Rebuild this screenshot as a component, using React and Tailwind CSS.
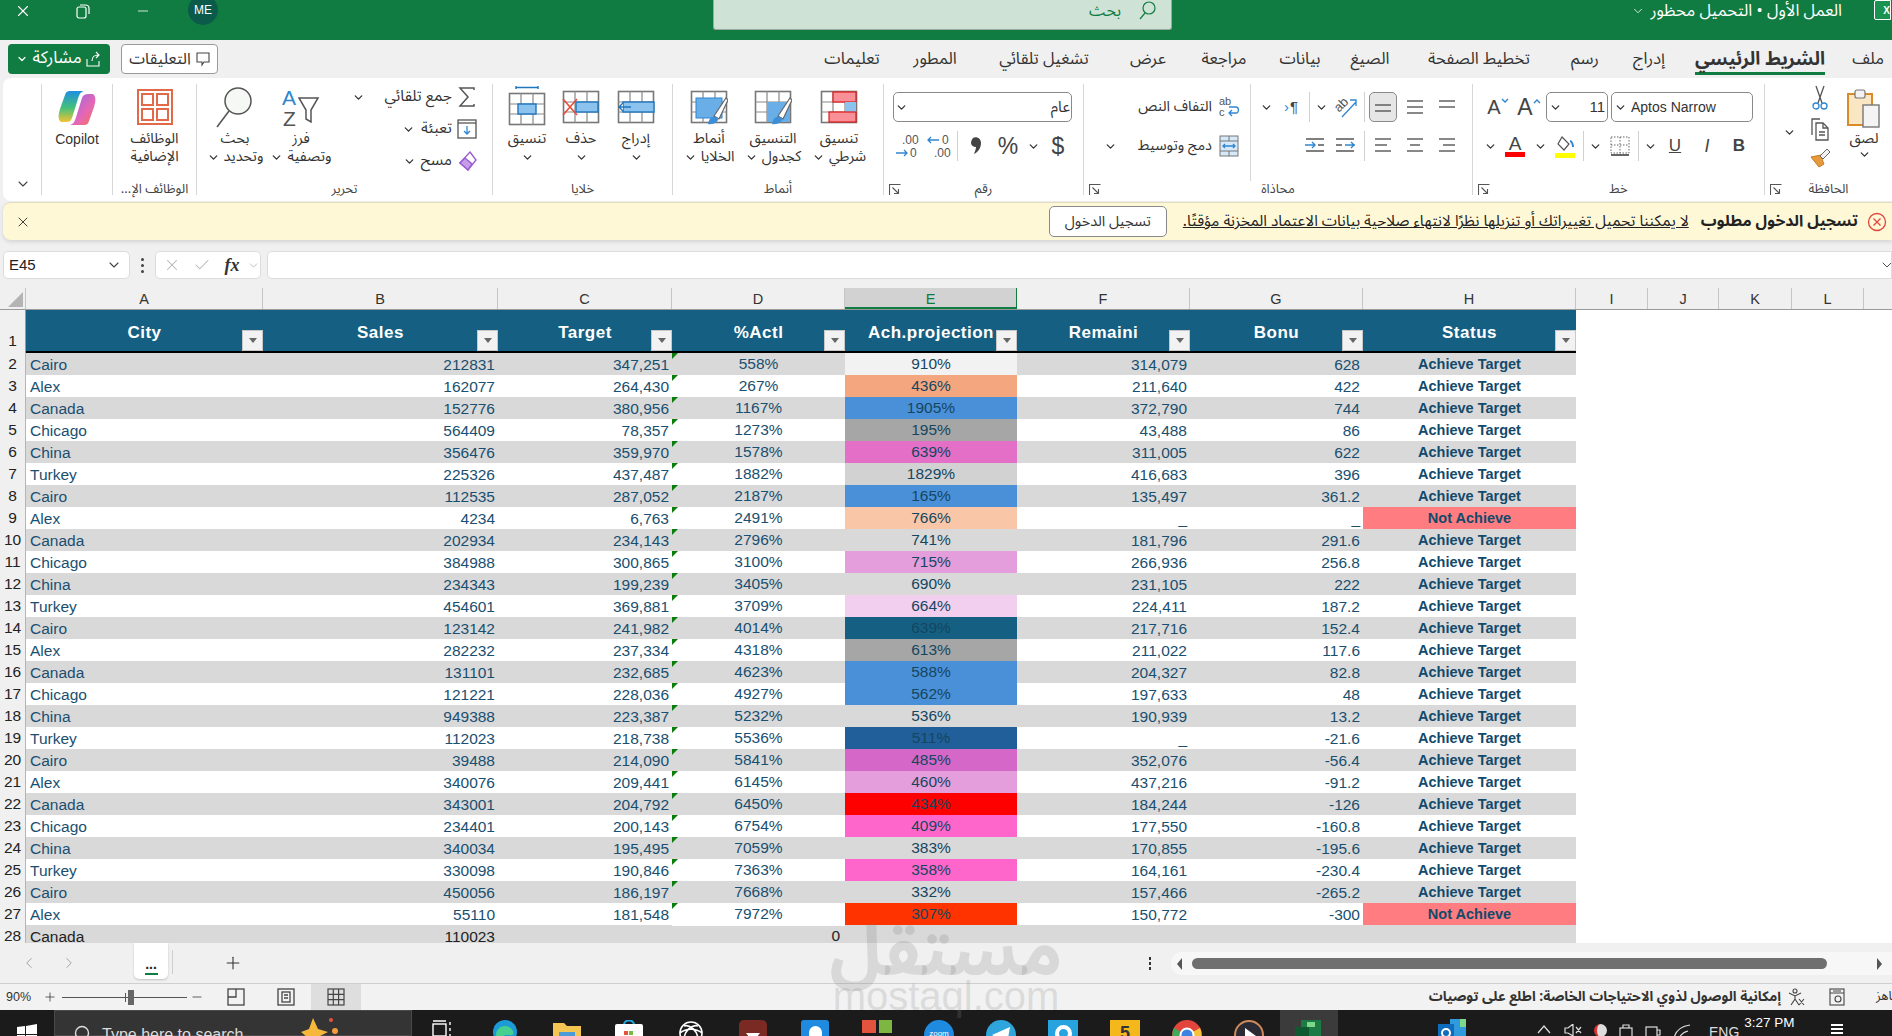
import { ChevronDown, ChevronLeft, ChevronRight, Check, X, Plus, Minus } from "lucide-react";

const ROWS = [
  ["Cairo", "212831", "347,251", "558%", "910%", "bg-[#f2f2f2]", "314,079", "628", "Achieve Target"],
  ["Alex", "162077", "264,430", "267%", "436%", "bg-[#f4a77f]", "211,640", "422", "Achieve Target"],
  ["Canada", "152776", "380,956", "1167%", "1905%", "bg-[#4a90d9]", "372,790", "744", "Achieve Target"],
  ["Chicago", "564409", "78,357", "1273%", "195%", "bg-[#a6a6a6]", "43,488", "86", "Achieve Target"],
  ["China", "356476", "359,970", "1578%", "639%", "bg-[#e46fc7]", "311,005", "622", "Achieve Target"],
  ["Turkey", "225326", "437,487", "1882%", "1829%", "bg-[#d2d2d2]", "416,683", "396", "Achieve Target"],
  ["Cairo", "112535", "287,052", "2187%", "165%", "bg-[#4a90d9]", "135,497", "361.2", "Achieve Target"],
  ["Alex", "4234", "6,763", "2491%", "766%", "bg-[#f9c6a8]", "_", "_", "Not Achieve"],
  ["Canada", "202934", "234,143", "2796%", "741%", "", "181,796", "291.6", "Achieve Target"],
  ["Chicago", "384988", "300,865", "3100%", "715%", "bg-[#e49edb]", "266,936", "256.8", "Achieve Target"],
  ["China", "234343", "199,239", "3405%", "690%", "", "231,105", "222", "Achieve Target"],
  ["Turkey", "454601", "369,881", "3709%", "664%", "bg-[#f2cfee]", "224,411", "187.2", "Achieve Target"],
  ["Cairo", "123142", "241,982", "4014%", "639%", "bg-[#156082]", "217,716", "152.4", "Achieve Target"],
  ["Alex", "282232", "237,334", "4318%", "613%", "bg-[#a6a6a6]", "211,022", "117.6", "Achieve Target"],
  ["Canada", "131101", "232,685", "4623%", "588%", "bg-[#4a90d9]", "204,327", "82.8", "Achieve Target"],
  ["Chicago", "121221", "228,036", "4927%", "562%", "bg-[#4a90d9]", "197,633", "48", "Achieve Target"],
  ["China", "949388", "223,387", "5232%", "536%", "", "190,939", "13.2", "Achieve Target"],
  ["Turkey", "112023", "218,738", "5536%", "511%", "bg-[#215f9a]", "_", "-21.6", "Achieve Target"],
  ["Cairo", "39488", "214,090", "5841%", "485%", "bg-[#d467c8]", "352,076", "-56.4", "Achieve Target"],
  ["Alex", "340076", "209,441", "6145%", "460%", "bg-[#e49edb]", "437,216", "-91.2", "Achieve Target"],
  ["Canada", "343001", "204,792", "6450%", "434%", "bg-[#ff0000]", "184,244", "-126", "Achieve Target"],
  ["Chicago", "234401", "200,143", "6754%", "409%", "bg-[#ff66cc]", "177,550", "-160.8", "Achieve Target"],
  ["China", "340034", "195,495", "7059%", "383%", "", "170,855", "-195.6", "Achieve Target"],
  ["Turkey", "330098", "190,846", "7363%", "358%", "bg-[#ff66cc]", "164,161", "-230.4", "Achieve Target"],
  ["Cairo", "450056", "186,197", "7668%", "332%", "", "157,466", "-265.2", "Achieve Target"],
  ["Alex", "55110", "181,548", "7972%", "307%", "bg-[#ff3300]", "150,772", "-300", "Not Achieve"],
];

const COLS = [
  ["A", "w-[237px]"], ["B", "w-[235px]"], ["C", "w-[174px]"], ["D", "w-[173px]"], ["E", "w-[172px]"], ["F", "w-[173px]"], ["G", "w-[173px]"],
  ["H", "w-[213px]"], ["I", "w-[72px]"], ["J", "w-[71px]"], ["K", "w-[73px]"], ["L", "w-[72px]"], ["M", "w-[72px]"],
];

const TABS = [
  ["ملف", "w-[48px]"], ["الشريط الرئيسي", "w-[168px]"], ["إدراج", "w-[54px]"], ["رسم", "w-[74px]"], ["تخطيط الصفحة", "w-[138px]"], ["الصيغ", "w-[80px]"],
  ["بيانات", "w-[60px]"], ["مراجعة", "w-[92px]"], ["عرض", "w-[60px]"], ["تشغيل تلقائي", "w-[148px]"], ["المطور", "w-[70px]"], ["تعليمات", "w-[96px]"],
];

const GRID = "grid grid-cols-[26px_237px_235px_174px_173px_172px_173px_173px_213px_1fr]";

const Chev = () => <ChevronDown size={13} strokeWidth={2.4} className="text-[#333] shrink-0" />;
const Chev2 = () => <ChevronDown size={12} strokeWidth={2.4} className="text-white shrink-0" />;
const ChevSlot = () => <span className="w-[14px] h-[30px] flex items-center justify-center shrink-0"><Chev /></span>;
const Divider = () => <span className="w-px h-[30px] bg-[#d0d0d0] shrink-0" />;
const Slot = ({ children, className = "" }) => <span className={`w-[28px] h-[30px] flex items-center justify-center shrink-0 text-[#444] ${className}`}>{children}</span>;

function Lines({ rows, top = 4 }) {
  return (
    <svg width="20" height="20" viewBox="0 0 20 20" stroke="#555" strokeWidth="1.4">
      {rows.map((r, i) => <line key={i} x1={r[0]} x2={r[1]} y1={top + i * 6} y2={top + i * 6} />)}
    </svg>
  );
}

function SheetGrid({ children }) {
  return (
    <svg width="38" height="36" viewBox="0 0 38 36">
      <rect x="1.5" y="2.5" width="35" height="31" fill="#fff" stroke="#777" strokeWidth="1.6" />
      <path d="M13 2v32M25 2v32M1 13h36M1 23h36" stroke="#888" strokeWidth="1.2" />
      {children}
    </svg>
  );
}

function Brush() {
  return (
    <g>
      <path d="M24 27L36 9l2 2-9 19z" fill="#fff" stroke="#666" strokeWidth="1.2" />
      <path d="M18 35c1-7 6-9 10-6 1 4-5 7-10 6z" fill="#3b8fd6" />
    </g>
  );
}

function Group({ width, label, launcher, children }) {
  return (
    <div className={`${width} h-full py-[6px] shrink-0`}>
      <div className="relative h-full border-l border-[#d6d6d6] flex flex-col">
        <div className="flex-1 min-h-0">{children}</div>
        <div className="h-[16px] -mb-[2px] text-center text-[13px] leading-[16px] text-[#444] whitespace-nowrap">{label}</div>
        {launcher && (
          <svg className="absolute left-[5px] -bottom-[1px]" width="12" height="12" viewBox="0 0 12 12" fill="none" stroke="#555" strokeWidth="1.1">
            <path d="M.5 11V.5H11.5M3.5 3.5l6 6M9.5 5v4.5H5" />
          </svg>
        )}
      </div>
    </div>
  );
}

function BigButton({ width, icon, lines, chevLine = true, chevBelow = false }) {
  return (
    <div className={`${width} flex flex-col items-center shrink-0 pt-[4px]`}>
      <div className="h-[38px] flex items-center justify-center">{icon}</div>
      <div className="mt-[4px] text-[14.5px] leading-[18px] text-center text-[#333] whitespace-nowrap">
        {lines.map((l, i) => (
          <div key={i} className="flex items-center justify-center gap-[4px]">
            <span>{l}</span>
            {chevLine && !chevBelow && i === lines.length - 1 && <Chev />}
          </div>
        ))}
        {chevBelow && <div className="h-[18px] flex items-center justify-center"><Chev /></div>}
      </div>
    </div>
  );
}

function Ribbon() {
  return (
    <div dir="rtl" className="ml-[3px] h-[123px] bg-white rounded-l-lg flex">
      <Group width="w-[128px]" label="الحافظة" launcher>
        <div className="flex pt-[4px] h-full">
          <div className="w-[58px] flex flex-col items-center -mr-[1px]">
            <svg width="36" height="40" viewBox="0 0 36 40">
              <rect x="2" y="6" width="24" height="31" fill="#fbe6c4" stroke="#d98a2b" strokeWidth="2" />
              <rect x="9" y="2" width="10" height="8" rx="2" fill="#f2f2f2" stroke="#777" strokeWidth="1.2" />
              <rect x="17" y="17" width="16" height="22" fill="#f4f4f4" stroke="#777" strokeWidth="1.4" />
            </svg>
            <span className="mt-[2px] text-[14.5px] leading-[18px] text-[#333]">لصق</span>
            <Chev />
          </div>
          <div className="w-[30px] flex flex-col items-center -mt-[3px] gap-[6px]">
            <svg width="18" height="26" viewBox="0 0 18 26" fill="none" strokeWidth="1.3">
              <path d="M5 1l6 17M13 1L7 18" stroke="#555" />
              <circle cx="5" cy="21" r="3" stroke="#2f86d0" />
              <circle cx="13" cy="21" r="3" stroke="#2f86d0" />
            </svg>
            <svg width="22" height="24" viewBox="0 0 22 24" fill="none" stroke="#555" strokeWidth="1.3">
              <path d="M3 18V2h8" />
              <path d="M7 6h7l5 5v12H7z" fill="#fff" />
              <path d="M14 6v5h5M10 15h6M10 18h6" />
            </svg>
            <svg width="24" height="22" viewBox="0 0 24 22">
              <path d="M3 10l8 10 5-3c-2-3-1-6-3-9z" fill="#e79a3c" stroke="#c77a1f" />
              <path d="M12 9l7-7 3 3-7 7z" fill="#f2f2f2" stroke="#666" />
            </svg>
          </div>
          <div className="mr-[9px] w-[14px] h-[88px] flex items-center justify-center"><Chev /></div>
        </div>
      </Group>

      <Group width="w-[292px]" label="خط" launcher>
        <div className="pt-[8px] pr-[11px] flex flex-col gap-[9px]">
          <div className="flex items-center">
            <div dir="ltr" className="w-[142px] h-[30px] border border-[#8a8a8a] rounded-[5px] flex items-center pl-[2px] gap-[4px] text-[14px] text-[#333] [font-family:'Liberation_Sans',sans-serif]"><Chev />Aptos Narrow</div>
            <div dir="ltr" className="mr-[3px] w-[62px] h-[30px] border border-[#8a8a8a] rounded-[5px] flex items-center justify-between px-[2px] text-[15px] text-[#333] [font-family:'Liberation_Sans',sans-serif]"><Chev />11</div>
            <span dir="ltr" className="mr-[3px] w-[28px] flex items-start justify-center text-[23px] leading-none text-[#444] [font-family:'Liberation_Sans',sans-serif]">A<svg className="mt-[2px]" width="8" height="6" viewBox="0 0 8 6" fill="none" stroke="#2f86d0" strokeWidth="1.4"><path d="M1 5l3-3 3 3" /></svg></span>
            <span dir="ltr" className="mr-[3px] w-[28px] flex items-start justify-center text-[20px] leading-none text-[#444] [font-family:'Liberation_Sans',sans-serif]">A<svg className="mt-[1px]" width="8" height="6" viewBox="0 0 8 6" fill="none" stroke="#2f86d0" strokeWidth="1.4"><path d="M1 1l3 3 3-3" /></svg></span>
          </div>
          <div className="flex items-center gap-[4px] text-[17px] [font-family:'Liberation_Sans',sans-serif]">
            <Slot className="font-bold">B</Slot>
            <Slot className="italic text-[18px]">I</Slot>
            <Slot className="underline">U</Slot>
            <ChevSlot />
            <Divider />
            <Slot>
              <svg width="20" height="22" viewBox="0 0 20 22" fill="none" stroke="#666" strokeWidth="1" strokeDasharray="1.5 1.5">
                <path d="M1 2h18v16H1zM10 2v16M1 10h18" />
                <path d="M1 20h18" strokeDasharray="none" strokeWidth="2" />
              </svg>
            </Slot>
            <ChevSlot />
            <Divider />
            <Slot>
              <span className="flex flex-col items-center">
                <svg width="20" height="18" viewBox="0 0 20 18" fill="none" stroke="#555" strokeWidth="1.2"><path d="M7 2l7 7-5 6-6-6z" fill="#fff" /><path d="M15 6c2 0 3 4 3 6" stroke="#2f86d0" strokeWidth="2" /></svg>
                <span className="w-[20px] h-[5px] bg-[#ffff00]" />
              </span>
            </Slot>
            <ChevSlot />
            <Slot>
              <span className="flex flex-col items-center leading-[17px] text-[19px]">A<span className="w-[20px] h-[5px] bg-[#ff0000]" /></span>
            </Slot>
            <ChevSlot />
          </div>
        </div>
      </Group>

      <Group width="w-[389px]" label="محاذاة" launcher>
        <div className="flex h-full">
          <div className="w-[221px] shrink-0 pt-[8px] pr-[11px] flex flex-col gap-[9px]">
            <div className="flex items-center gap-[4px]">
              <Slot><Lines top={4} rows={[[2, 18], [2, 18]]} /></Slot>
              <Slot><Lines top={4} rows={[[2, 18], [2, 18], [2, 18]]} /></Slot>
              <Slot className="bg-[#e6e6e6] border border-[#8a8a8a] rounded-[5px]"><Lines top={8} rows={[[2, 18], [2, 18]]} /></Slot>
              <Divider />
              <Slot>
                <svg direction="ltr" width="24" height="24" viewBox="0 0 24 24" fill="none">
                  <text x="0" y="14" fontSize="13" fill="#555" fontFamily="Liberation Sans" transform="rotate(-45 7 10)">ab</text>
                  <path d="M8 22L22 7M16 5h6v6" stroke="#2f86d0" strokeWidth="1.3" />
                </svg>
              </Slot>
              <ChevSlot />
              <Divider />
              <Slot className="text-[15px] [font-family:'Liberation_Sans',sans-serif]"><span dir="ltr" className="flex items-center"><span className="text-[#2f86d0] mr-[1px]">›</span>¶</span></Slot>
              <ChevSlot />
            </div>
            <div className="flex items-center gap-[4px]">
              <Slot><Lines top={3} rows={[[2, 18], [6, 18], [2, 18]]} /></Slot>
              <Slot><Lines top={3} rows={[[2, 18], [5, 15], [2, 18]]} /></Slot>
              <Slot><Lines top={3} rows={[[2, 18], [2, 14], [2, 18]]} /></Slot>
              <Divider />
              <Slot>
                <svg width="22" height="20" viewBox="0 0 22 20" fill="none" stroke="#555" strokeWidth="1.4">
                  <path d="M1 3h18M1 9h6M1 15h18" />
                  <path d="M10 9h10M16 6l3 3-3 3" stroke="#2f86d0" />
                </svg>
              </Slot>
              <Slot>
                <svg width="22" height="20" viewBox="0 0 22 20" fill="none" stroke="#555" strokeWidth="1.4">
                  <path d="M3 3h18M15 9h6M3 15h18" />
                  <path d="M2 9h10M9 6l3 3-3 3" stroke="#2f86d0" />
                </svg>
              </Slot>
            </div>
          </div>
          <div className="border-r border-[#d6d6d6] h-full flex-1 pt-[8px] pr-[7px] flex flex-col gap-[9px] text-[14.5px] text-[#333]">
            <div className="flex items-center gap-[3px] h-[30px]">
              <Slot>
                <svg direction="ltr" width="22" height="24" viewBox="0 0 22 24" fill="none">
                  <text x="1" y="10" fontSize="11" fill="#555" fontFamily="Liberation Sans">ab</text>
                  <text x="1" y="21" fontSize="11" fill="#555" fontFamily="Liberation Sans">c</text>
                  <path d="M12 18h7c2-1 2-6-1-6h-7M14 15l-3 3 3 3" stroke="#2f86d0" strokeWidth="1.3" />
                </svg>
              </Slot>
              <span>التفاف النص</span>
            </div>
            <div className="flex items-center gap-[3px] h-[30px]">
              <Slot>
                <svg width="20" height="22" viewBox="0 0 20 22" fill="none">
                  <rect x="1" y="1" width="18" height="20" fill="#d6e9f8" stroke="#777" />
                  <path d="M1 6h18M1 16h18M10 1v5M10 16v5" stroke="#777" />
                  <path d="M4 11h12M6 9l-2 2 2 2M14 9l2 2-2 2" stroke="#2f86d0" strokeWidth="1.3" />
                </svg>
              </Slot>
              <span>دمج وتوسيط</span>
              <span className="mr-[18px] flex"><Chev /></span>
            </div>
          </div>
        </div>
      </Group>

      <Group width="w-[200px]" label="رقم" launcher>
        <div className="pt-[8px] pr-[11px] flex flex-col gap-[9px]">
          <div className="w-[179px] h-[30px] border border-[#8a8a8a] rounded-[5px] flex items-center justify-between px-[1px] text-[15px] text-[#333]">
            <span>عام</span>
            <Chev />
          </div>
          <div className="flex items-center gap-[4px] [font-family:'Liberation_Sans',sans-serif]">
            <Slot className="text-[23px]">$</Slot>
            <ChevSlot />
            <Slot className="text-[23px]">%</Slot>
            <Slot>
              <svg width="12" height="22" viewBox="0 0 12 22"><path d="M3 3c3-2 8 0 8 5 0 5-3 9-7 11 1-3 2-5 2-7-3 0-5-2-5-4 0-2 1-4 2-5z" fill="#444" /></svg>
            </Slot>
            <Divider />
            <Slot>
              <svg direction="ltr" width="26" height="26" viewBox="0 0 26 26" fill="none">
                <text x="16" y="11" fontSize="12" fill="#555" fontFamily="Liberation Sans">0</text>
                <text x="8" y="24" fontSize="12" fill="#555" fontFamily="Liberation Sans">.00</text>
                <path d="M13 7H2M5 4L2 7l3 3" stroke="#2f86d0" strokeWidth="1.3" />
              </svg>
            </Slot>
            <Slot>
              <svg direction="ltr" width="26" height="26" viewBox="0 0 26 26" fill="none">
                <text x="8" y="11" fontSize="12" fill="#555" fontFamily="Liberation Sans">.00</text>
                <text x="16" y="24" fontSize="12" fill="#555" fontFamily="Liberation Sans">0</text>
                <path d="M2 20h11M10 17l3 3-3 3" stroke="#2f86d0" strokeWidth="1.3" />
              </svg>
            </Slot>
          </div>
        </div>
      </Group>

      <Group width="w-[211px]" label="أنماط">
        <div className="flex pr-[11px]">
          <BigButton width="w-[66px]" lines={["تنسيق", "شرطي"]} icon={
            <SheetGrid>
              <rect x="13" y="3" width="23" height="10" fill="#f98f97" stroke="#e01b1b" strokeWidth="1.2" />
              <rect x="25" y="13" width="11" height="10" fill="#8cc3ee" />
              <rect x="9" y="23" width="27" height="10" fill="#f98f97" stroke="#e01b1b" strokeWidth="1.2" />
            </SheetGrid>
          } />
          <BigButton width="w-[66px]" lines={["التنسيق", "كجدول"]} icon={
            <SheetGrid>
              <rect x="13" y="13" width="23" height="20" fill="#6aaee8" />
              <Brush />
            </SheetGrid>
          } />
          <BigButton width="w-[62px]" lines={["أنماط", "الخلايا"]} icon={
            <SheetGrid>
              <rect x="6" y="9" width="26" height="20" fill="#6aaee8" stroke="#2f86d0" />
              <Brush />
            </SheetGrid>
          } />
        </div>
      </Group>

      <Group width="w-[180px]" label="خلايا">
        <div className="flex pr-[6px]">
          <BigButton width="w-[60px]" chevBelow lines={["إدراج"]} icon={
            <SheetGrid>
              <rect x="6" y="13" width="31" height="10" fill="#8cc3ee" stroke="#1f76bf" strokeWidth="1.4" />
              <path d="M2 18h12M6 14l-4 4 4 4" stroke="#1f76bf" strokeWidth="1.4" fill="#fff" />
            </SheetGrid>
          } />
          <BigButton width="w-[50px]" chevBelow lines={["حذف"]} icon={
            <SheetGrid>
              <rect x="14" y="13" width="22" height="10" fill="#8cc3ee" stroke="#1f76bf" strokeWidth="1.4" />
              <path d="M1 10l14 16M15 10L1 26" stroke="#ea4d3a" strokeWidth="1.6" />
            </SheetGrid>
          } />
          <BigButton width="w-[58px]" chevBelow lines={["تنسيق"]} icon={
            <svg width="38" height="42" viewBox="0 0 38 42">
              <path d="M8 1.5h22M8 0v3M30 0v3" stroke="#1f76bf" strokeWidth="1.4" />
              <rect x="1.5" y="7.5" width="35" height="31" fill="#fff" stroke="#777" strokeWidth="1.6" />
              <path d="M13 7v32M25 7v32M1 18h36M1 28h36" stroke="#888" strokeWidth="1.2" />
              <rect x="10" y="18" width="18" height="10" fill="#8cc3ee" stroke="#1f76bf" strokeWidth="1.4" />
            </svg>
          } />
        </div>
      </Group>

      <Group width="w-[296px]" label="تحرير">
        <div className="flex pr-[11px]">
          <div className="w-[147px] shrink-0 flex flex-col gap-[6px] text-[15.5px] text-[#333]">
            <div className="flex items-center h-[26px] gap-[1px]">
              <Slot>
                <svg width="20" height="22" viewBox="0 0 20 22" fill="none" stroke="#555" strokeWidth="1.5"><path d="M17 4V2H3l8 9-8 9h14v-2" /></svg>
              </Slot>
              <span className="whitespace-nowrap">جمع تلقائي</span>
              <span className="mr-[19px] flex"><Chev /></span>
            </div>
            <div className="flex items-center h-[26px] gap-[1px]">
              <Slot>
                <svg width="20" height="20" viewBox="0 0 20 20" fill="none" stroke="#555" strokeWidth="1.3">
                  <rect x="1" y="1" width="18" height="18" />
                  <path d="M1 4h18" />
                  <path d="M10 7v8M7 12l3 3 3-3" stroke="#2f86d0" />
                </svg>
              </Slot>
              <span>تعبئة</span>
              <span className="mr-[5px] flex"><Chev /></span>
            </div>
            <div className="flex items-center h-[26px] gap-[1px]">
              <Slot>
                <svg width="22" height="22" viewBox="0 0 22 22" stroke="#9a5fd0" strokeWidth="1.4">
                  <path d="M14 2l6 8-8 10-8-7z" fill="#fff" />
                  <path d="M9 8l7 6-4 6-8-7z" fill="#c79ce8" />
                </svg>
              </Slot>
              <span>مسح</span>
              <span className="mr-[4px] flex"><Chev /></span>
            </div>
          </div>
          <BigButton width="w-[66px]" lines={["فرز", "وتصفية"]} icon={
            <svg direction="ltr" width="38" height="42" viewBox="0 0 38 42" fill="none">
              <text x="0" y="19" fontSize="21" fill="#2f86d0" fontFamily="Liberation Sans">A</text>
              <text x="1" y="40" fontSize="21" fill="#555" fontFamily="Liberation Sans">Z</text>
              <path d="M17 12h19l-7 12v12l-5-3v-9z" stroke="#555" strokeWidth="1.5" />
            </svg>
          } />
          <BigButton width="w-[66px]" lines={["بحث", "وتحديد"]} icon={
            <svg width="38" height="44" viewBox="0 0 38 44" fill="none" stroke="#555" strokeWidth="1.5">
              <circle cx="22" cy="16" r="13" fill="#f6f8f6" />
              <path d="M13 26L1 42" />
            </svg>
          } />
        </div>
      </Group>

      <Group width="w-[84px]" label="الوظائف الإ...">
        <div className="flex">
          <BigButton width="w-full" chevLine={false} lines={["الوظائف", "الإضافية"]} icon={
            <svg width="36" height="36" viewBox="0 0 36 36" fill="none" stroke="#e2694a" strokeWidth="2">
              <rect x="1" y="1" width="34" height="34" />
              <rect x="5" y="5" width="11" height="11" />
              <rect x="20" y="5" width="11" height="11" />
              <rect x="5" y="20" width="11" height="11" />
              <rect x="20" y="20" width="11" height="11" />
            </svg>
          } />
        </div>
      </Group>

      <Group width="w-[71px]" label="">
        <div className="flex">
          <div className="w-full flex flex-col items-center pt-[4px]">
            <svg width="38" height="40" viewBox="0 0 38 40">
              <defs>
                <linearGradient id="cpA" x1="0" y1="0" x2="0" y2="1">
                  <stop offset="0" stopColor="#1f8fe0" />
                  <stop offset="0.55" stopColor="#45c07a" />
                  <stop offset="1" stopColor="#f3c433" />
                </linearGradient>
                <linearGradient id="cpB" x1="0" y1="0" x2="1" y2="1">
                  <stop offset="0" stopColor="#8d6ae6" />
                  <stop offset="0.6" stopColor="#e667b5" />
                  <stop offset="1" stopColor="#f7724a" />
                </linearGradient>
              </defs>
              <path d="M12 3h14c-4 1-5 4-7 11l-5 16c-1 3-3 4-6 4H3C0 32 0 27 2 21L7 7c1-3 2-4 5-4z" fill="url(#cpA)" />
              <path d="M26 37H12c4-1 5-4 7-11l5-16c1-3 3-4 6-4h5c3 2 3 7 1 13l-5 14c-1 3-2 4-5 4z" fill="url(#cpB)" />
            </svg>
            <span className="mt-[2px] text-[14px] leading-[18px] text-[#333] [font-family:'Liberation_Sans',sans-serif]">Copilot</span>
          </div>
        </div>
      </Group>

      <div className="flex-1 h-full pb-[6px] flex items-end justify-center pl-[2px]">
        <span className="mb-[3px] flex"><ChevronDown size={16} strokeWidth={1.6} className="text-[#444]" /></span>
      </div>
    </div>
  );
}

function TitleBar() {
  return (
    <div className="h-[40px] bg-[#107c41] flex items-start overflow-hidden text-white">
      <div className="w-[46px] h-[22px] flex items-center justify-center shrink-0"><X size={18} strokeWidth={1.5} /></div>
      <div className="ml-[14px] w-[46px] h-[22px] flex items-center justify-center shrink-0">
        <svg width="14" height="16" viewBox="0 0 14 16" fill="none" stroke="#fff" strokeWidth="1.2"><rect x="1" y="4" width="9" height="11" rx="2" /><path d="M4 2h5c2 0 4 1 4 3v6" /></svg>
      </div>
      <div className="ml-[14px] w-[46px] h-[22px] flex items-center justify-center shrink-0"><Minus size={16} strokeWidth={1.2} /></div>
      <div className="ml-[22px] -mt-[5px] w-[30px] h-[30px] rounded-full bg-[#0b5a4a] flex items-center justify-center text-[12px] shrink-0 [font-family:'Liberation_Sans',sans-serif]">ME</div>
      <div dir="rtl" className="ml-[495px] w-[459px] h-[30px] bg-[#cfe2d6] rounded-b-[3px] border-b border-x border-[#9aa8a0] flex items-center gap-[18px] pr-[14px] pb-[8px] text-[#107c41] text-[16px] shrink-0">
        <svg width="18" height="20" viewBox="0 0 18 20" fill="none" stroke="#107c41" strokeWidth="1.2"><circle cx="10" cy="7" r="6" /><path d="M6 12l-5 6" /></svg>
        <span>بحث</span>
      </div>
      <div dir="rtl" className="flex-1 flex items-center h-[22px] pr-[1px]">
        <div className="w-[17px] h-[20px] -mt-[2px] bg-[#1a9350] border border-white rounded-l-[2px] flex items-center justify-start text-[10px] font-bold pl-[1px] shrink-0 [font-family:'Liberation_Sans',sans-serif]">X</div>
        <span className="mr-[32px] text-[16.5px] whitespace-nowrap">العمل الأول • التحميل محظور</span>
        <ChevronDown size={14} strokeWidth={1.4} className="mr-[6px]" />
      </div>
    </div>
  );
}

function TabsRow() {
  return (
    <div className="h-[38px] flex items-center">
      <div className="ml-[8px] w-[102px] h-[30px] bg-[#107c41] rounded-[4px] flex items-center justify-center gap-[4px] text-white text-[17px] shrink-0">
        <Chev2 />
        <span dir="rtl">مشاركة</span>
        <svg width="16" height="16" viewBox="0 0 16 16" fill="none" stroke="#fff" strokeWidth="1.1"><path d="M1 8v7h12v-5M6 10c0-4 3-6 6-6M10 1l3 3-3 3" /></svg>
      </div>
      <div className="ml-[11px] w-[97px] h-[30px] bg-white border border-[#9a9a9a] rounded-[4px] flex items-center justify-center gap-[5px] text-[#333] text-[16px] shrink-0">
        <span dir="rtl">التعليقات</span>
        <svg width="14" height="15" viewBox="0 0 14 15" fill="none" stroke="#444" strokeWidth="1.1"><path d="M1 1h12v9H8l-2 3v-3H1z" /></svg>
      </div>
      <div dir="rtl" className="ml-auto flex items-center h-full pt-[1px] text-[16.5px] text-[#333]">
        {TABS.map(([t, w], i) => (
          <div key={t} className={`${w} text-center shrink-0 whitespace-nowrap`}>
            {i === 1 ? <span className="inline-block font-bold text-[18.5px] leading-[24px] border-b-[3px] border-[#107c41] mt-[4px]">{t}</span> : t}
          </div>
        ))}
      </div>
    </div>
  );
}

function MessageBar() {
  return (
    <div className="mt-[1px] ml-[3px] h-[38px] bg-[#fff8d6] border-t border-[#e3dcc0] rounded-l-lg shadow-[0_2px_4px_rgba(0,0,0,0.12)] flex items-center">
      <div className="w-[40px] flex justify-center shrink-0"><X size={16} strokeWidth={1.4} className="text-[#333]" /></div>
      <div dir="rtl" className="flex-1 flex items-center pr-[5px] text-[#222]">
        <svg width="20" height="20" viewBox="0 0 20 20" fill="none" stroke="#e0453f" strokeWidth="1.3" className="shrink-0">
          <circle cx="10" cy="10" r="8.5" />
          <path d="M6.5 6.5l7 7M13.5 6.5l-7 7" />
        </svg>
        <span className="mr-[9px] font-bold text-[15.7px] whitespace-nowrap">تسجيل الدخول مطلوب</span>
        <span className="mr-[12px] underline text-[15.4px] whitespace-nowrap">لا يمكننا تحميل تغييراتك أو تنزيلها نظرًا لانتهاء صلاحية بيانات الاعتماد المخزنة مؤقتًا.</span>
        <button className="mr-[16px] w-[118px] h-[31px] bg-white border border-[#8a8a8a] rounded-[5px] text-[14.5px] text-[#333] shrink-0">تسجيل الدخول</button>
      </div>
    </div>
  );
}

function FormulaBar() {
  return (
    <div className="mt-[11px] h-[28px] flex items-center [font-family:'Liberation_Sans',sans-serif]">
      <div className="ml-[3px] w-[127px] h-[28px] bg-white border border-[#dcdcdc] rounded-[5px] flex items-center justify-between pl-[5px] pr-[7px] text-[15px] text-[#222] shrink-0">
        E45
        <ChevronDown size={16} strokeWidth={1.6} className="text-[#444]" />
      </div>
      <div className="w-[25px] flex flex-col items-center gap-[3px] shrink-0">
        <span className="w-[3px] h-[3px] bg-[#444] rounded-full" />
        <span className="w-[3px] h-[3px] bg-[#444] rounded-full" />
        <span className="w-[3px] h-[3px] bg-[#444] rounded-full" />
      </div>
      <div className="w-[106px] h-[28px] bg-white border border-[#dcdcdc] rounded-[5px] flex items-center shrink-0 text-[#b5b5b5]">
        <span className="w-[30px] flex justify-center ml-[1px]"><X size={18} strokeWidth={1.4} /></span>
        <span className="w-[30px] flex justify-center"><Check size={18} strokeWidth={1.4} /></span>
        <span className="w-[30px] text-center text-[18px] italic font-bold text-[#333] [font-family:'Liberation_Serif',serif]">fx</span>
        <ChevronDown size={13} strokeWidth={1.6} />
      </div>
      <div className="ml-[6px] flex-1 h-[28px] bg-white border border-[#dcdcdc] rounded-l-[5px] flex items-center justify-end overflow-hidden">
        <ChevronDown size={16} strokeWidth={1.4} className="text-[#444] -mr-[4px]" />
      </div>
    </div>
  );
}

function FilterBtn() {
  return (
    <span className="absolute right-0 bottom-0 w-[21px] h-[21px] bg-[#f2f2f2] border border-[#c8c8c8] flex items-center justify-center">
      <span className="w-0 h-0 border-x-[4px] border-x-transparent border-t-[5px] border-t-[#666]" />
    </span>
  );
}

function Sheet() {
  return (
    <div className="mt-[9px] h-[655px] overflow-hidden flex flex-col [font-family:'Liberation_Sans',sans-serif]">
      <div className="flex h-[22px] shrink-0 border-b border-[#9a9a9a]">
        <div className="w-[26px] flex items-end justify-end pr-[2px] pb-[2px] border-r border-[#c6c6c6] shrink-0">
          <svg width="15" height="15" viewBox="0 0 15 15"><path d="M15 0v15H0z" fill="#b4b4b4" /></svg>
        </div>
        {COLS.map(([c, w]) => (
          <div key={c} className={`${w} shrink-0 text-center text-[14.5px] leading-[22px] border-r ${c === "E" ? "bg-[#d2d2d2] text-[#107c41] border-b-2 border-[#107c41]" : "text-[#333] border-[#c6c6c6]"}`}>{c}</div>
        ))}
      </div>
      <div className={`${GRID} h-[43px] shrink-0`}>
        <div className="border-r border-[#9a9a9a] text-center text-[15.5px] text-[#222] flex items-end justify-center pb-[1px]">1</div>
        {["City", "Sales", "Target", "%Actl", "Ach.projection", "Remaini", "Bonu", "Status"].map((h) => (
          <div key={h} className="relative bg-[#156082] border-b-2 border-black text-white font-bold text-[17px] tracking-[0.5px] flex items-center justify-center pt-[4px]">
            {h}
            <FilterBtn />
          </div>
        ))}
        <div className="bg-white" />
      </div>
      {ROWS.map((r, i) => {
        const gray = i % 2 === 0;
        const bg = gray ? "bg-[#d9d9d9]" : "bg-white";
        const bad = r[8] === "Not Achieve";
        return (
          <div key={i} className={`${GRID} h-[22px] shrink-0 text-[15.5px] text-[#194f70] leading-[22px]`}>
            <div className="bg-[#f0f0f0] border-r border-b border-[#b5b5b5] text-center text-[#222]">{i + 2}</div>
            <div className={`${bg} pl-[4px] pt-[1px]`}>{r[0]}</div>
            <div className={`${bg} text-right pr-[3px] pt-[1px]`}>{r[1]}</div>
            <div className={`${bg} text-right pr-[3px] pt-[1px]`}>{r[2]}</div>
            <div className={`${bg} relative text-center`}>
              <span className="absolute left-0 top-0 w-[6px] h-[6px] bg-[#0a7d0a] [clip-path:polygon(0_0,100%_0,0_100%)]" />
              {r[3]}
            </div>
            <div className={`${r[5] || bg} text-center text-[#14465f]`}>{r[4]}</div>
            <div className={`${bg} text-right pr-[3px] pt-[1px]`}>{r[6]}</div>
            <div className={`${bg} text-right pr-[3px] pt-[1px]`}>{r[7]}</div>
            <div className={`${bad ? "bg-[#ff7c80]" : bg} text-center font-bold text-[14.5px] text-[#124a6b]`}>{r[8]}</div>
            <div className="bg-white" />
          </div>
        );
      })}
      <div className={`${GRID} h-[22px] shrink-0 text-[15.5px] text-[#222] leading-[22px]`}>
        <div className="bg-[#f0f0f0] border-r border-[#b5b5b5] text-center">28</div>
        <div className="bg-[#d9d9d9] pl-[4px] pt-[1px]">Canada</div>
        <div className="bg-[#d9d9d9] text-right pr-[3px] pt-[1px]">110023</div>
        <div className="bg-[#d9d9d9]" />
        <div className="bg-[#d9d9d9] text-right pr-[5px]">0</div>
        <div className="bg-[#d9d9d9]" />
        <div className="bg-[#d9d9d9]" />
        <div className="bg-[#d9d9d9]" />
        <div className="bg-[#d9d9d9]" />
        <div className="bg-white" />
      </div>
    </div>
  );
}

function SheetTabs() {
  return (
    <div className="h-[40px] flex items-start text-[#555] [font-family:'Liberation_Sans',sans-serif]">
      <div className="ml-[20px] w-[18px] h-[40px] flex items-center"><ChevronLeft size={20} strokeWidth={1.2} className="text-[#999]" /></div>
      <div className="ml-[22px] w-[18px] h-[40px] flex items-center"><ChevronRight size={20} strokeWidth={1.2} className="text-[#999]" /></div>
      <div className="ml-[56px] w-[34px] h-[36px] bg-white rounded-b-[5px] shadow-[0_1px_2px_rgba(0,0,0,0.2)] flex flex-col items-center justify-end pb-[4px] shrink-0">
        <span className="text-[14px] font-bold leading-[12px] text-[#222]">...</span>
        <span className="mt-[3px] w-[13px] h-[2px] bg-[#107c41]" />
      </div>
      <div className="ml-[4px] mt-[7px] w-px h-[24px] bg-[#cfcfcf]" />
      <div className="ml-[50px] h-[40px] flex items-center text-[#333]"><Plus size={20} strokeWidth={1.3} /></div>
      <div className="ml-[904px] h-[40px] flex flex-col items-center justify-center gap-[2px] w-[6px]">
        <span className="w-[2px] h-[3px] bg-[#333]" />
        <span className="w-[2px] h-[3px] bg-[#333]" />
        <span className="w-[2px] h-[3px] bg-[#333]" />
      </div>
      <div className="ml-[18px] mt-[9px] flex-1 h-[23px] bg-[#f7f7f7] rounded-l-[11px] flex items-center">
        <span className="ml-[6px] w-0 h-0 border-y-[6px] border-y-transparent border-r-[5px] border-r-[#555]" />
        <span className="ml-[10px] w-[635px] h-[11px] bg-[#6f6f6f] rounded-full" />
        <span className="ml-[50px] w-0 h-0 border-y-[6px] border-y-transparent border-l-[5px] border-l-[#555]" />
      </div>
    </div>
  );
}

function StatusBar() {
  return (
    <div className="h-[27px] bg-[#f2f2f2] border-t border-[#cfcfcf] flex items-center text-[#333] overflow-hidden">
      <span className="ml-[6px] w-[30px] text-[12.5px] [font-family:'Liberation_Sans',sans-serif] shrink-0">90%</span>
      <Plus size={14} strokeWidth={1.3} className="ml-[7px] shrink-0" />
      <div className="ml-[5px] relative w-[125px] h-px bg-[#555] shrink-0">
        <span className="absolute left-[63px] -top-[4px] w-px h-[9px] bg-[#555]" />
        <span className="absolute left-[66px] -top-[7px] w-[6px] h-[15px] bg-[#666]" />
      </div>
      <Minus size={14} strokeWidth={1.3} className="ml-[3px] shrink-0" />
      <div className="ml-[7px] w-[50px] flex justify-center shrink-0">
        <svg width="18" height="18" viewBox="0 0 18 18" fill="none" stroke="#444" strokeWidth="1.3"><rect x="1" y="1" width="16" height="16" /><path d="M9 1v8H1" /></svg>
      </div>
      <div className="w-[50px] flex justify-center shrink-0">
        <svg width="18" height="18" viewBox="0 0 18 18" fill="none" stroke="#444" strokeWidth="1.3"><rect x="1" y="1" width="16" height="16" /><rect x="5" y="4" width="8" height="10" /><path d="M7 7h4M7 10h4" /></svg>
      </div>
      <div className="w-[50px] h-[26px] bg-[#dedede] flex items-center justify-center shrink-0">
        <svg width="18" height="18" viewBox="0 0 18 18" fill="none" stroke="#444" strokeWidth="1.2"><rect x="1" y="1" width="16" height="16" /><path d="M6.3 1v16M11.6 1v16M1 6.3h16M1 11.6h16" /></svg>
      </div>
      <div dir="rtl" className="ml-auto flex items-center whitespace-nowrap">
        <span className="-mr-[8px] w-[36px] shrink-0 text-[13px]">جاهز</span>
        <svg className="mr-[18px]" width="18" height="18" viewBox="0 0 18 18" fill="none" stroke="#444" strokeWidth="1.1"><rect x="2" y="1" width="14" height="16" /><path d="M2 5h14M5 3h8" /><circle cx="10" cy="11" r="3" /></svg>
        <svg className="mr-[23px]" width="18" height="18" viewBox="0 0 18 18" fill="none" stroke="#444" strokeWidth="1.1"><circle cx="8" cy="3" r="2" /><path d="M2 5l6 3 6-3M8 8v3l-4 6M8 11l4 6M12 11l5 6M17 11l-5 6" /></svg>
        <span className="mr-[6px] font-bold text-[13.8px]">إمكانية الوصول لذوي الاحتياجات الخاصة: اطلع على توصيات</span>
      </div>
    </div>
  );
}

function AppIcon({ children }) {
  return <div className="w-[62px] flex justify-center pt-[10px] shrink-0">{children}</div>;
}

function Taskbar() {
  return (
    <div className="h-[26px] bg-[#1b1b1b] flex overflow-hidden text-white [font-family:'Liberation_Sans',sans-serif]">
      <div className="w-[54px] flex justify-center pt-[14px] shrink-0">
        <svg width="20" height="20" viewBox="0 0 20 20" fill="#fff"><path d="M0 3l8-1v8H0zM9 2l11-2v10H9zM0 11h8v8l-8-1zM9 11h11v9L9 18z" /></svg>
      </div>
      <div className="w-[358px] bg-[#343434] flex items-start shrink-0 border border-[#4a4a4a]">
        <svg className="ml-[19px] mt-[14px] shrink-0" width="17" height="17" viewBox="0 0 17 17" fill="none" stroke="#ddd" strokeWidth="1.4"><circle cx="8" cy="8" r="6.5" /></svg>
        <span className="ml-[11px] mt-[15px] text-[16px] leading-[18px] text-[#ddd] whitespace-nowrap">Type here to search</span>
        <svg className="ml-[56px] mt-[7px] shrink-0" width="48" height="24" viewBox="0 0 48 24"><path d="M14 0l5 11 10 3-10 5H8l-6-5 8-3z" fill="#f5b83d" /><circle cx="36" cy="13" r="3" fill="#f59b3d" /><circle cx="32" cy="2" r="2" fill="#e2543d" /></svg>
      </div>
      <AppIcon><svg width="22" height="20" viewBox="0 0 22 20" fill="none" stroke="#fff" strokeWidth="1.4"><rect x="1" y="4" width="13" height="12" /><path d="M1 1h13M18 2v3M18 8v3M18 14v3" /></svg></AppIcon>
      <AppIcon><svg width="24" height="24" viewBox="0 0 24 24"><circle cx="12" cy="12" r="12" fill="#1d9bd6" /><path d="M3 14c1-6 7-10 13-7 4 2 6 7 3 8-3 1-9-2-9 3 0 3 4 4 6 4-6 2-13-2-13-8z" fill="#46d08f" /></svg></AppIcon>
      <AppIcon><svg width="28" height="24" viewBox="0 0 28 24"><path d="M0 3h11l3 3h14v18H0z" fill="#f4c553" /><rect x="6" y="12" width="16" height="12" fill="#4c9bd9" /></svg></AppIcon>
      <AppIcon><svg width="28" height="26" viewBox="0 0 28 26"><path d="M9 5c0-6 10-6 10 0" fill="none" stroke="#22a5dc" strokeWidth="2" /><rect y="4" width="28" height="22" rx="2" fill="#fff" /><rect x="9" y="11" width="4" height="4" fill="#e2543d" /><rect x="14" y="11" width="4" height="4" fill="#7db742" /><rect x="9" y="16" width="4" height="4" fill="#22a5dc" /><rect x="14" y="16" width="4" height="4" fill="#f5b83d" /></svg></AppIcon>
      <AppIcon><svg width="26" height="26" viewBox="0 0 26 26" fill="none" stroke="#fff" strokeWidth="1.6"><circle cx="13" cy="13" r="11" /><path d="M6 6c6-2 14 5 14 14M20 6c-6-2-14 5-14 14M2 13c6-5 16-5 22 0" /></svg></AppIcon>
      <AppIcon><div className="w-[28px] h-[28px] bg-[#7a2a22] rounded-[5px] flex justify-center pt-[13px]"><span className="w-0 h-0 border-x-[7px] border-x-transparent border-t-[9px] border-t-white" /></div></AppIcon>
      <AppIcon><div className="w-[28px] h-[28px] bg-[#1f8be0] rounded-[3px] flex justify-center pt-[6px]"><span className="w-[13px] h-[13px] rounded-t-full bg-white" /></div></AppIcon>
      <AppIcon><div className="w-[30px] h-[28px] grid grid-cols-2 gap-[3px]"><span className="bg-[#e2543d]" /><span className="bg-[#7db742]" /><span className="bg-[#333]" /><span className="bg-[#333]" /></div></AppIcon>
      <AppIcon><div className="w-[30px] h-[30px] rounded-full bg-[#1f8be0] text-[8px] text-center leading-[28px]">zoom</div></AppIcon>
      <AppIcon><svg width="30" height="30" viewBox="0 0 30 30"><circle cx="15" cy="15" r="15" fill="#2ea5dc" /><path d="M6 15l18-8-3 17-6-4-3 4-1-6z" fill="#fff" /></svg></AppIcon>
      <AppIcon><div className="w-[30px] h-[30px] bg-[#27a3e0] flex justify-center pt-[5px]"><span className="w-[17px] h-[17px] rounded-full border-[4px] border-white" /></div></AppIcon>
      <AppIcon><div className="w-[30px] h-[30px] bg-[#f5b81c] text-[#333] font-bold text-[18px] text-center leading-[26px]">5</div></AppIcon>
      <AppIcon><svg width="30" height="30" viewBox="0 0 30 30"><circle cx="15" cy="15" r="15" fill="#e2453c" /><path d="M15 15L28 8a15 15 0 0 1-9 21z" fill="#f5c33b" /><path d="M15 15l4 14A15 15 0 0 1 2 8z" fill="#3cab5a" /><circle cx="15" cy="15" r="6.5" fill="#3c82e0" stroke="#fff" strokeWidth="2" /></svg></AppIcon>
      <AppIcon><svg width="30" height="30" viewBox="0 0 30 30"><circle cx="15" cy="15" r="14" fill="#2b2b35" stroke="#d08a5a" strokeWidth="2" /><path d="M11 8l11 8-11 8z" fill="#fff" /></svg></AppIcon>
      <div className="w-[58px] bg-[#3b3b3b] flex justify-center pt-[10px] shrink-0"><svg width="28" height="26" viewBox="0 0 28 26"><path d="M6 0h20v26H6z" fill="#1c7a45" /><path d="M0 7h14v14H0z" fill="#0e5a30" /><path d="M12 2h8v5h-8z" fill="#7ed88a" /></svg></div>
      <div className="ml-[100px] pt-[9px] shrink-0"><svg width="30" height="28" viewBox="0 0 30 28"><path d="M12 0h16v24H12z" fill="#2f9ade" /><path d="M22 0h6v8h-6z" fill="#7ed88a" /><rect y="5" width="16" height="18" fill="#0f6cbd" /><circle cx="8" cy="14" r="4" fill="none" stroke="#fff" strokeWidth="2" /></svg></div>
      <div className="ml-[18px] mt-[17px] w-[28px] shrink-0 text-[14px] text-[#ddd] text-center [font-family:'DejaVu_Sans',sans-serif]">رت</div>
      <div className="ml-[22px] pt-[14px] flex gap-[12px] shrink-0">
        <svg width="16" height="10" viewBox="0 0 16 10" fill="none" stroke="#ddd" strokeWidth="1.2"><path d="M2 9l6-7 6 7" /></svg>
        <svg width="18" height="14" viewBox="0 0 18 14" fill="none" stroke="#ddd" strokeWidth="1.2"><path d="M1 4h3l5-4v12L4 9H1zM12 3l5 6M17 3l-5 6" /></svg>
        <span className="w-[13px] h-[13px] rounded-full bg-[#ddd] border-l-[3px] border-[#d33] shrink-0" />
        <svg width="14" height="16" viewBox="0 0 14 16" fill="none" stroke="#ddd" strokeWidth="1.2"><rect x="1" y="4" width="12" height="12" /><path d="M4 4V1h6v3" /></svg>
        <svg width="16" height="14" viewBox="0 0 16 14" fill="none" stroke="#ddd" strokeWidth="1.2"><rect x="1" y="3" width="11" height="11" /><path d="M12 6h3v5h-3" /></svg>
        <svg width="18" height="14" viewBox="0 0 18 14" fill="none" stroke="#ddd" strokeWidth="1.2"><path d="M1 14C3 6 9 2 17 1M6 14c2-4 5-6 9-7" /></svg>
      </div>
      <span className="ml-[18px] pt-[14px] text-[14px] leading-[16px] shrink-0 text-[#ddd]">ENG</span>
      <span className="ml-[5px] pt-[5px] text-[13.5px] leading-[16px] shrink-0 whitespace-nowrap">3:27 PM</span>
      <div className="ml-[36px] pt-[14px] flex flex-col gap-[2px] shrink-0"><span className="w-[12px] h-[2px] bg-white" /><span className="w-[12px] h-[2px] bg-white" /><span className="w-[12px] h-[2px] bg-white" /></div>
    </div>
  );
}

export default function App() {
  return (
    <div className="relative w-[1892px] h-[1036px] overflow-hidden bg-[#f0f0f0] [font-family:'Noto_Sans_Arabic','DejaVu_Sans',sans-serif]">
      <TitleBar />
      <TabsRow />
      <Ribbon />
      <MessageBar />
      <FormulaBar />
      <Sheet />
      <SheetTabs />
      <StatusBar />
      <Taskbar />
      {/* site watermark over the bottom bars */}
      <div className="absolute left-[831px] top-[921px] w-[230px] flex flex-col items-center pointer-events-none">
        <span dir="rtl" className="text-[70px] leading-[64px] font-bold whitespace-nowrap text-[rgba(120,120,120,0.2)]">مستقل</span>
        <span className="-mt-[11px] text-[40px] leading-[44px] text-[rgba(140,140,140,0.24)] [font-family:'Liberation_Sans',sans-serif]">mostaql.com</span>
      </div>
    </div>
  );
}
